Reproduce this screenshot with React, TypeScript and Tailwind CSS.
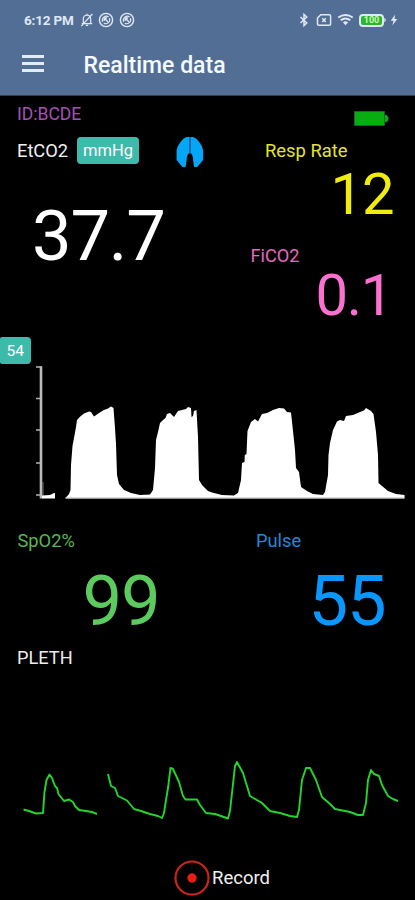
const capnogram =
  "M65.5 498L69 494L70.5 490L71 465L72.5 446L76 427L77 420L80 416.7L84 413.5L89 411.5L91 412L94 416.5L99 413L104 410L108 408.5L111 406.5L113.5 408L115 428L116 444L117 475L119 484L124 490L131 493L140 495L150 494.5L153 490L155 468L156 440L158 432L160 423L163 420L165.5 418L167 414L170 413L174 417L178 411L186 409L188 407L191 408L191.5 417L193 416L194 411L196.5 410L198 437L199 480L202 485L208 491L212 492.5L222 495L234 495.5L238 493L241 480L242 463L244.5 462L244.8 455L246.5 454L247.5 431L251 422L255 419L258 421.5L262 414L267 413L273 410L279 408L284 408.5L287 412L291 412.5L293 431L295 450L296 468L299 472L301 487L307 491L313 494L323 495L325 492L328 475L328.5 455L330 443L333 430L337 421.5L340 420L344 421L346 416L353 415L360 412L364 410.5L366 408L371 411L373.5 414L376 432L378 455L378.5 483L382 486L388 491L396 494L404.5 495V498Z";

const pleth = [
  "M23.5 809.5L29 811L36 813.5L43 813L44.5 792L46.5 780L49.5 774.5L52 778L55 786L57 788L58.5 794L64 801L69 799.5L73 802L75 806L79 810L86 811L92 812L97 814",
  "M108 774L111 786L115 788L118 796L127 800.5L134 809L141 811L150 814L158 816L162 818L164 813L166 800L168 788L170.5 768L173 769L179 782L183 796L185.5 799.5H197L200 805L206 813L215 814L221 816L228 818.5L230 811L233 784L235 766L237 762L243 773L250 796L262 803L270 811L280 813L290 816L297 817L299 810L302 780L306 768H310L316 780L322 797L330 804L335 809L350 812L358 815H363L366 803L368 780L371 770L374 774L379 776L382 785L388 796L393 799L398 801",
];

function NfcBadge() {
  return (
    <svg viewBox="0 0 16 16" className="h-4 w-4" fill="none" stroke="currentColor">
      <circle cx="8" cy="8" r="6.6" strokeWidth="1.4" />
      <path d="M4.7 9.8A4 4 0 0 1 10.6 4.9M11.4 6.2A4 4 0 0 1 5.8 11.2" strokeWidth="1.2" />
      <path d="M6.2 6L10 10M6.2 9V6H9" strokeWidth="1.3" />
    </svg>
  );
}

function StatusBar() {
  return (
    <div className="flex h-10 items-center pl-6 pr-[17px] text-[#dfe8f5]">
      <span className="w-[51px] whitespace-nowrap text-[13.5px] font-bold tracking-[-0.2px]">6:12 PM</span>
      <svg viewBox="0 0 14 16" className="ml-[5px] h-4 w-3.5" fill="none" stroke="currentColor" strokeWidth="1.2">
        <path d="M1.8 11.7H12.2M3.3 11.5V6.8A3.7 3.7 0 0 1 10.7 6.8V11.5M7 3V1.8M5.8 13.4H8.2M12.4 2L1.3 14.2" />
      </svg>
      <div className="ml-[3.5px] flex gap-[5px]">
        <NfcBadge />
        <NfcBadge />
      </div>
      <svg viewBox="0 0 10 16" className="ml-auto h-4 w-2.5" fill="none" stroke="currentColor" strokeWidth="1.5">
        <path d="M1.5 5L7.8 11L5 13.5V2.5L7.8 5L1.5 11" />
      </svg>
      <svg viewBox="0 0 16 14" className="ml-[7.5px] h-3.5 w-4" fill="none" stroke="currentColor" strokeWidth="1.5">
        <path d="M4.8 1.7H13.3Q14.6 1.7 14.6 3V11Q14.6 12.3 13.3 12.3H2.8Q1.5 12.3 1.5 11V5Z" />
        <path d="M6.3 5.2L9.8 9M9.8 5.2L6.3 9" />
      </svg>
      <svg viewBox="0 0 18 14" className="ml-[5px] h-3.5 w-[17px]" fill="none" stroke="currentColor">
        <path d="M1.3 4.4Q9 -1.2 16.7 4.4M3.9 7.2Q9 3.5 14.1 7.2" strokeWidth="2.1" />
        <path d="M6.2 9.3Q9 7.3 11.8 9.3L9 12.6Z" fill="currentColor" stroke="none" />
      </svg>
      <div className="ml-[5px] flex h-[13px] w-[25px] items-center justify-center rounded-[4px] border-2 border-[#dfe8f5] bg-[#2fb52f] text-[9px] font-bold leading-none text-[#c9f5b8]">
        100
      </div>
      <span className="h-1 w-[2px] rounded-r bg-[#b9c8dd]" />
      <svg viewBox="0 0 8 12" className="ml-[4px] h-3 w-2" fill="currentColor">
        <path d="M5.2 .5L.7 6.8H3.5L2.3 11.5L7.3 5H4.5Z" />
      </svg>
    </div>
  );
}

function Header() {
  return (
    <header className="h-24 border-b border-[#343f55] bg-[#526e95]">
      <StatusBar />
      <div className="flex h-[49px] items-center">
        <div className="mb-[3px] ml-[22px] flex w-[22px] flex-col gap-[4px]">
          <span className="h-[3px] bg-[#e2ecf7]" />
          <span className="h-[3px] bg-[#e2ecf7]" />
          <span className="h-[3px] bg-[#e2ecf7]" />
        </div>
        <h1 className="ml-[39.5px] pt-px text-[23px] font-medium leading-none text-[#f5faff]">Realtime data</h1>
      </div>
    </header>
  );
}

function Lungs() {
  return (
    <svg viewBox="0 0 28 32" className="ml-[36.5px] mt-[3px] h-8 w-7" fill="#04a6f7">
      <path d="M13.4 1H11Q8 1.5 4.5 6Q1 10.5 .6 14V24L6.5 31H9.5Q10.5 27 10.8 22Q11.2 18 13.4 17.3Z" />
      <path d="M14.3 1H16.7Q19.7 1.5 23.2 6Q26.7 10.5 27.1 14V24L21.2 31H18.2Q17.2 27 16.9 22Q16.5 18 14.3 17.3Z" />
      <path d="M13 1H14.7V17H13Z" fill="#0868a0" />
    </svg>
  );
}

function Readings() {
  return (
    <section className="flex h-[221px]">
      <div className="w-[240px]">
        <div className="flex h-9 items-center pl-[17px] text-[17.5px] text-[#a551b5]">ID:BCDE</div>
        <div className="flex h-[37px] items-center pl-[17px] text-[18.3px] text-[#f1f1f1]">
          <span className="w-[60px]">EtCO2</span>
          <span className="flex h-[27px] w-[62px] items-center justify-center rounded-[4px] bg-[#3ebaab] pt-0.5 text-[16.5px] text-white">
            mmHg
          </span>
          <Lungs />
        </div>
        <div className="mt-[31px] pl-[32px] text-[70.5px] leading-[72px] tracking-[-1.2px] text-white">37.7</div>
      </div>
      <div className="w-[175px]">
        <div className="flex h-9 pl-[114px] pt-[15px]">
          <svg viewBox="0 0 36 15" className="h-[15px] w-9">
            <path d="M.5 .5H30.5V14.5H.5Z" fill="#08ad12" stroke="#30533a" />
            <path d="M31 3.5Q34.5 4.5 34.5 7.5T31 11.5Z" fill="#08ad12" />
          </svg>
        </div>
        <div className="flex h-[37px] items-center pl-[25px] text-[18.4px] text-[#e3e62e]">Resp Rate</div>
        <div className="pl-[90.5px] text-[58px] leading-[51px] tracking-[-1.2px] text-[#f0ed0c]">12</div>
        <div className="mt-[18px] flex h-9 items-center pl-[10.5px] text-[18.2px] text-[#e768c2]">FiCO2</div>
        <div className="pl-[75.5px] text-[58px] leading-[42px] tracking-[-1.3px] text-[#fb70d1]">0.1</div>
      </div>
    </section>
  );
}

function Capnograph() {
  return (
    <section className="pt-5">
      <div className="flex h-[27px] w-[30.5px] items-center justify-center rounded-r-[4px] rounded-l-[2px] bg-[#3ebaab] pt-0.5 text-[15.5px] text-white">
        54
      </div>
      <svg viewBox="0 364 415 138" className="block h-[138px] w-full">
        <path d="M36 367H42M36 398.5H40M36 430H40M36 463H40M36 495H40" stroke="#b5b5b5" strokeWidth="1.3" />
        <path d="M41 366.5V498.5" stroke="#bcbcbc" strokeWidth="2.6" />
        <path d="M43 482V498" stroke="#777" strokeWidth="1" />
        <path d="M42 495.5L50 495L54 493H55V498.5H42Z" fill="#fff" />
        <path d={capnogram} fill="#fff" />
        <path d="M65.5 498H404.5" stroke="#ccc" strokeWidth="1.6" />
      </svg>
    </section>
  );
}

function Oximetry() {
  return (
    <section className="pt-5">
      <div className="flex h-[37px] items-center text-[18.3px]">
        <span className="w-[240px] pl-[17.5px] text-[#55b757]">SpO2%</span>
        <span className="pl-4 text-[#2387da]">Pulse</span>
      </div>
      <div className="flex text-[70.5px] leading-[84px] tracking-[-1px]">
        <span className="w-[228px] pl-[82.5px] text-[#5bcb5e]">99</span>
        <span className="pl-[80.5px] text-[#0997ff]">55</span>
      </div>
      <div className="flex h-[29px] items-center pl-[17px] text-[18.2px] text-[#ececec]">PLETH</div>
      <svg viewBox="0 672 415 184" className="block h-[184px] w-full" fill="none" stroke="#24d52a" strokeWidth="1.9" strokeLinejoin="round">
        {pleth.map((d) => (
          <path key={d} d={d} />
        ))}
      </svg>
    </section>
  );
}

export default function App() {
  return (
    <div className="h-[900px] w-[415px] overflow-hidden bg-black font-['Roboto',sans-serif]">
      <Header />
      <Readings />
      <Capnograph />
      <Oximetry />
      <button className="flex h-11 w-full items-center pl-[174px] text-[18.5px] text-[#f0f0f0]">
        <svg viewBox="0 0 36 36" className="h-9 w-9">
          <circle cx="18" cy="18" r="16.5" fill="none" stroke="#cc2418" strokeWidth="2.2" />
          <circle cx="18" cy="18" r="4.7" fill="#e5200c" />
        </svg>
        <span className="ml-[2px] pt-[2px]">Record</span>
      </button>
    </div>
  );
}
